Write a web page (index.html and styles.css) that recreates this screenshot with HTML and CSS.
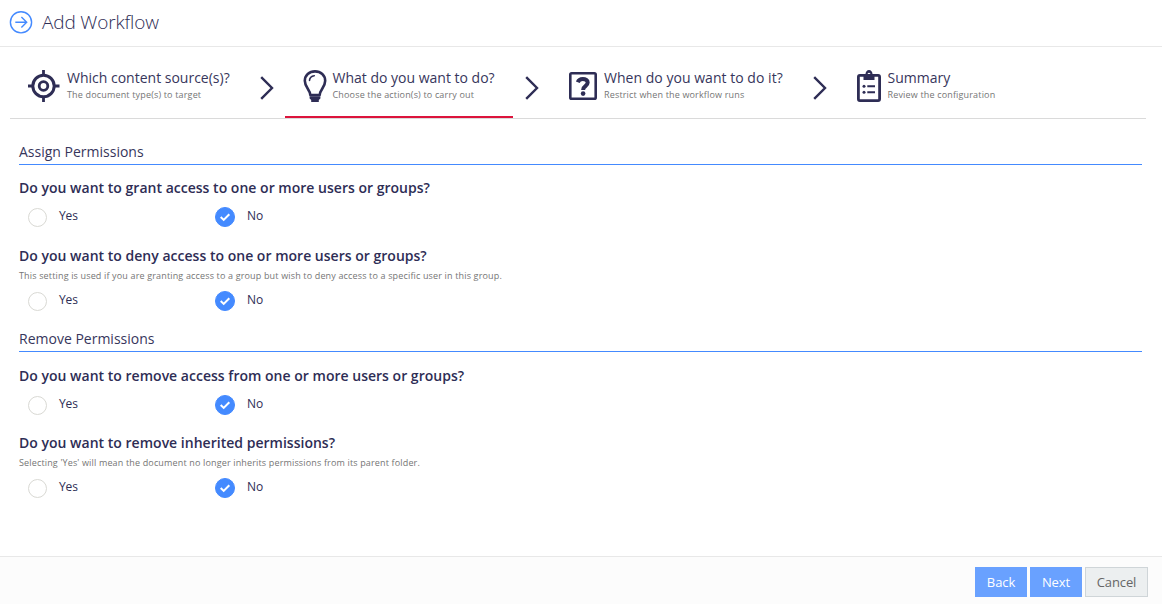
FILE: index.html
```html
<!DOCTYPE html>
<html lang="en">
<head>
<meta charset="utf-8">
<title>Add Workflow</title>
<link rel="stylesheet" href="styles.css">
</head>
<body>
<div class="page">
  <header class="header">
    <svg class="header-icon" width="24" height="24" viewBox="0 0 24 24" fill="none" stroke="#448aff" stroke-width="1.4"><circle cx="12" cy="12.3" r="10.6"/><path d="M6.3 12.3h11.2M12.4 7l5.3 5.3-5.3 5.3"/></svg>
    <h1 class="title">Add Workflow</h1>
  </header>
  <nav class="steps">
    <div class="step step-source">
      <svg class="step-icon" width="32" height="32" viewBox="0 0 32 32" fill="none" stroke="#2e2d55"><circle cx="15.5" cy="16" r="10.7" stroke-width="3"/><circle cx="15.5" cy="16" r="4.3" stroke-width="2.8"/><path stroke-width="2.8" d="M15.500 0v6M15.500 26v6M0 16h5.500M25.500 16h6"/></svg>
      <div class="step-text"><span class="step-name">Which content source(s)?</span><span class="step-hint">The document type(s) to target</span></div>
    </div>
    <svg class="chevron chevron-first" width="14" height="24" viewBox="0 0 14 24"><path d="M1.2 1.2L12 12 1.2 22.8"/></svg>
    <div class="step step-action active">
      <svg class="step-icon" width="24" height="32" viewBox="0 0 24 32"><path fill="none" stroke="#2e2d55" stroke-width="2.6" stroke-linejoin="round" d="M7.3 25C7 19.5 1.8 17 1.8 10.8 1.8 5.3 6.2 1.4 12 1.4s10.2 3.9 10.2 9.4C22.2 17 17 19.5 16.7 25z"/><path fill="none" stroke="#2e2d55" stroke-width="1.6" stroke-linecap="round" d="M6.5 10.4c.2-2.8 2-4.4 4.8-4.7"/><path fill="#2e2d55" d="M6.6 26.3h10.8v2.2l-1.6 1.4v2.1H8.2v-2.1l-1.6-1.4z"/></svg>
      <div class="step-text"><span class="step-name">What do you want to do?</span><span class="step-hint">Choose the action(s) to carry out</span></div>
    </div>
    <svg class="chevron" width="14" height="24" viewBox="0 0 14 24"><path d="M1.2 1.2L12 12 1.2 22.8"/></svg>
    <div class="step step-when">
      <svg class="step-icon" width="28" height="28" viewBox="0 0 28 28" fill="none" stroke="#2e2d55"><rect x="1.3" y="1.3" width="25.4" height="25.4" rx="1.3" stroke-width="2.6"/><path stroke-width="4" d="M8.8 10.2c.8-2.2 2.6-3.2 5-3.2 2.8 0 4.9 1.3 4.9 3.6 0 3.5-4.5 3.5-4.5 6.9v.6"/><circle cx="14.1" cy="21.6" r="2.3" fill="#2e2d55" stroke="none"/></svg>
      <div class="step-text"><span class="step-name">When do you want to do it?</span><span class="step-hint">Restrict when the workflow runs</span></div>
    </div>
    <svg class="chevron" width="14" height="24" viewBox="0 0 14 24"><path d="M1.2 1.2L12 12 1.2 22.8"/></svg>
    <div class="step step-summary">
      <svg class="step-icon" width="24" height="32" viewBox="0 0 24 32"><rect x="1.4" y="5.4" width="21.2" height="25.2" rx="1.5" fill="none" stroke="#2e2d55" stroke-width="2.8"/><path fill="#2e2d55" fill-rule="evenodd" d="M6.5 4h2C8.5 1.7 10 0 12 0s3.5 1.7 3.5 4h2v6h-11zM12 2.7a1.5 1.5 0 1 0 0 3 1.5 1.5 0 0 0 0-3z"/><path stroke="#2e2d55" stroke-width="2" d="M10.3 16.2h7.7M10.3 22.2h7.7"/><circle cx="7" cy="16.2" r="1.5" fill="#2e2d55"/><circle cx="7" cy="22.2" r="1.5" fill="#2e2d55"/></svg>
      <div class="step-text"><span class="step-name">Summary</span><span class="step-hint">Review the configuration</span></div>
    </div>
  </nav>
  <main class="content">
    <h2 class="section">Assign Permissions</h2>
    <div class="question question-grant">
      <h3 class="prompt">Do you want to grant access to one or more users or groups?</h3>
      <div class="options"><label class="option"><span class="radio"></span>Yes</label><label class="option"><span class="radio checked"><svg width="12" height="10" viewBox="0 0 12 10"><path d="M1.7 5l3 2.9L10.3 2.2"/></svg></span>No</label></div>
    </div>
    <div class="question question-deny">
      <h3 class="prompt">Do you want to deny access to one or more users or groups?</h3>
      <p class="note">This setting is used if you are granting access to a group but wish to deny access to a specific user in this group.</p>
      <div class="options"><label class="option"><span class="radio"></span>Yes</label><label class="option"><span class="radio checked"><svg width="12" height="10" viewBox="0 0 12 10"><path d="M1.7 5l3 2.9L10.3 2.2"/></svg></span>No</label></div>
    </div>
    <h2 class="section section-remove">Remove Permissions</h2>
    <div class="question question-remove">
      <h3 class="prompt">Do you want to remove access from one or more users or groups?</h3>
      <div class="options"><label class="option"><span class="radio"></span>Yes</label><label class="option"><span class="radio checked"><svg width="12" height="10" viewBox="0 0 12 10"><path d="M1.7 5l3 2.9L10.3 2.2"/></svg></span>No</label></div>
    </div>
    <div class="question question-inherit">
      <h3 class="prompt">Do you want to remove inherited permissions?</h3>
      <p class="note">Selecting 'Yes' will mean the document no longer inherits permissions from its parent folder.</p>
      <div class="options"><label class="option"><span class="radio"></span>Yes</label><label class="option"><span class="radio checked"><svg width="12" height="10" viewBox="0 0 12 10"><path d="M1.7 5l3 2.9L10.3 2.2"/></svg></span>No</label></div>
    </div>
  </main>
  <footer class="footer">
    <button class="button primary">Back</button>
    <button class="button primary">Next</button>
    <button class="button cancel">Cancel</button>
  </footer>
</div>
</body>
</html>
```
FILE: styles.css
```css
* { box-sizing: border-box; }
body { margin: 0; background: #fff; color: #2e2d55; font-family: "Open Sans", sans-serif; white-space: nowrap; }
h1, h2, h3, p { margin: 0; }
svg { display: block; flex: none; }
.page { height: 604px; display: flex; flex-direction: column; }

.header { height: 47px; border-bottom: 1px solid #e8e8e8; padding: 0 0 3px 9px; display: flex; align-items: center; gap: 9px; }
.title { font-size: 19px; font-weight: 300; line-height: 26px; letter-spacing: -0.15px; }

.steps { height: 72px; margin: 0 16px 0 10px; border-bottom: 1px solid #dadada; display: flex; align-items: flex-start; }
.step { height: 71px; padding: 21px 0 0 17px; display: flex; align-items: flex-start; }
.step-text { display: flex; flex-direction: column; }
.step-name { font-size: 14px; line-height: 20px; color: #37365c; }
.step-hint { font-size: 9px; line-height: 13px; letter-spacing: 0.165px; color: #757575; }
.step-icon { margin-top: 2px; }
.chevron { margin: 29px 12px 0; fill: none; stroke: #2e2d55; stroke-width: 2.4; }
.chevron-first { margin: 29px 11px 0 13px; }
.step-source { width: 237px; gap: 7px; padding-left: 18px; }
.step-action { width: 228px; gap: 6px; padding-left: 17.5px; }
.step-when { width: 250px; gap: 7px; padding-left: 18px; }
.step-when .step-icon { margin-top: 4px; }
.step-when .step-name { letter-spacing: 0.03px; }
.step-summary { gap: 7px; padding-left: 17.5px; }
.active { border-bottom: 2px solid #dc143c; }

.content { flex: 1; padding: 21px 20px 0 19px; }
.section { height: 25px; border-bottom: 1px solid #448aff; font-size: 14px; font-weight: 400; line-height: 24px; color: #37365c; }
.question { padding-top: 13px; }
.prompt { font-size: 14px; font-weight: 600; line-height: 20px; letter-spacing: 0.015px; }
.note { font-size: 9px; line-height: 13px; letter-spacing: 0.155px; margin-top: 3px; color: #757575; }
.options { display: flex; height: 22px; margin-top: 8px; padding-left: 8px; }
.option { width: 188px; display: flex; gap: 12px; font-size: 12px; line-height: 19px; letter-spacing: -0.1px; }
.radio { width: 20px; height: 20px; margin-top: 1px; border: 1px solid #d9d9d4; border-radius: 50%; flex: none; display: flex; align-items: center; justify-content: center; }
.radio:not(.checked) { width: 19px; height: 19px; margin: 2px 0 0 1px; }
.checked { background: #448aff; border-color: #448aff; }
.checked path { fill: none; stroke: #fff; stroke-width: 2; }
.question-deny { padding-top: 18px; }
.question-remove { padding-top: 14px; }
.question-inherit { padding-top: 17px; }
.section-remove { margin-top: 15px; }

.footer { height: 48px; background: #fcfcfc; border-top: 1px solid #e8e8e8; display: flex; justify-content: flex-end; padding: 10px 14px 0 0; gap: 3px; }
.button { height: 30px; border: 0; padding: 0; font: 400 13px "Open Sans", sans-serif; }
.primary { width: 52px; background: #69a1ff; color: #fff; font-weight: 500; letter-spacing: -0.1px; }
.cancel { width: 63px; background: #eceff0; border: 1px solid #cfd5d8; color: #666; letter-spacing: -0.1px; }
```
